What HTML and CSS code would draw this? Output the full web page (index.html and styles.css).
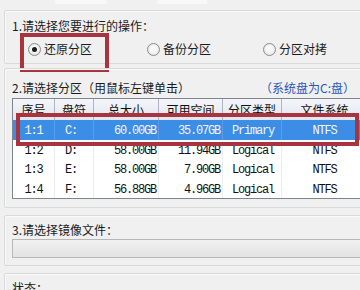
FILE: index.html
```html
<!DOCTYPE html>
<html lang="zh-CN">
<head>
<meta charset="utf-8">
<title>还原分区</title>
<link rel="stylesheet" href="styles.css">
</head>
<body>
<div class="topbar">
  <span class="seg seg-a"></span>
  <span class="seg seg-b"></span>
</div>
<div class="page">
  <section class="group g1">
    <div class="label">1.请选择您要进行的操作：</div>
    <div class="radios">
      <label class="radio"><span class="circle on"></span>还原分区</label>
      <label class="radio"><span class="circle"></span>备份分区</label>
      <label class="radio"><span class="circle"></span>分区对拷</label>
    </div>
    <div class="mark mark-op"></div>
  </section>

  <section class="group g2">
    <div class="label row-label">
      <span>2.请选择分区（用鼠标左键单击）</span>
      <span class="note">（系统盘为C:盘）</span>
    </div>
    <div class="table">
      <div class="row head">
        <span>序号</span><span>盘符</span><span>总大小</span><span>可用空间</span><span>分区类型</span><span>文件系统</span>
      </div>
      <div class="row sel">
        <span class="c">1:1</span><span class="l">C:</span><span class="r">60.00GB</span><span class="r">35.07GB</span><span class="l2">Primary</span><span class="c">NTFS</span>
      </div>
      <div class="row">
        <span class="c">1:2</span><span class="l">D:</span><span class="r">58.00GB</span><span class="r">11.94GB</span><span class="l2">Logical</span><span class="c">NTFS</span>
      </div>
      <div class="row">
        <span class="c">1:3</span><span class="l">E:</span><span class="r">58.00GB</span><span class="r">7.90GB</span><span class="l2">Logical</span><span class="c">NTFS</span>
      </div>
      <div class="row">
        <span class="c">1:4</span><span class="l">F:</span><span class="r">56.88GB</span><span class="r">4.96GB</span><span class="l2">Logical</span><span class="c">NTFS</span>
      </div>
    </div>
    <div class="mark mark-row"></div>
  </section>

  <section class="group g3">
    <div class="label">3.请选择镜像文件：</div>
    <div class="file"></div>
  </section>

  <section class="group g4">
    <div class="label">状态：</div>
  </section>
</div>
</body>
</html>
```

FILE: styles.css
```css
html, body {
  margin: 0;
  padding: 0;
  background: #f0f0f0;
  overflow: hidden;
}

body {
  width: 360px;
  height: 290px;
  font-family: "Noto Sans CJK SC", "Liberation Sans", sans-serif;
  font-size: 12px;
  color: #1b1b1b;
}

.topbar {
  height: 10px;
  display: flex;
  align-items: flex-start;
}

.seg {
  display: block;
  height: 4px;
  background: #f8f8f8;
}

.seg-a { width: 52px; margin-left: 55px; }
.seg-b { width: 50px; margin-left: 50px; }

.page {
  padding-left: 4px;
  display: flex;
  flex-direction: column;
}

.group {
  position: relative;
  width: 372px;
  box-sizing: border-box;
  border: 1px solid #d9d9d9;
  border-radius: 2px;
  box-shadow: inset 1px 1px 0 #fafafa;
  padding: 0 7px;
}

.label {
  height: 16px;
  line-height: 16px;
  white-space: nowrap;
}

.g1 { padding-top: 7px; padding-bottom: 6px; }
.g2 { margin-top: 4px; padding-top: 11px; padding-bottom: 8px; }
.g3 { margin-top: 7px; padding-top: 6px; padding-bottom: 7px; }
.g4 { margin-top: 7px; padding-top: 6px; height: 40px; }

/* radios */
.radios {
  margin-top: 7px;
  height: 16px;
  display: grid;
  grid-template-columns: 119px 116px auto;
  padding-left: 16px;
}

.radio {
  display: flex;
  align-items: center;
  gap: 3px;
  line-height: 16px;
}

.circle {
  width: 13px;
  height: 13px;
  box-sizing: border-box;
  border-radius: 50%;
  border: 1px solid #8b8b8b;
  background: radial-gradient(circle at 50% 45%, #ffffff 0%, #f4f4f4 45%, #d6d6d6 100%);
  display: grid;
  place-items: center;
}

.circle.on::after {
  content: "";
  width: 5px;
  height: 5px;
  border-radius: 50%;
  background: #1c1c1c;
}

/* section 2 */
.row-label {
  display: flex;
  justify-content: space-between;
}

.note {
  color: #2a55b8;
  margin-right: 13px;
}

.table {
  margin-top: 2px;
  width: 356px;
  box-sizing: border-box;
  border: 1px solid #7f8590;
  background: #ffffff;
}

.row {
  display: grid;
  grid-template-columns: 42px 39px 65px 64px 59px 85px;
  height: 19.5px;
  font-family: "Liberation Mono", "Noto Sans CJK SC", monospace;
  font-size: 12px;
  letter-spacing: -1.2px;
  color: #111;
}

.row span {
  box-sizing: border-box;
  border-right: 1px solid #ececec;
  padding-top: 4px;
  line-height: 15px;
  white-space: nowrap;
  overflow: hidden;
}

.row span:last-child { border-right: 0; }

.row .c { text-align: center; }
.row .l { padding-left: 10px; }
.row .r { text-align: right; padding-right: 2px; }
.row .l2 { padding-left: 9px; }

.head {
  height: 21px;
  background: linear-gradient(#f3f5f9, #e2e7ef);
  font-family: "Noto Sans CJK SC", sans-serif;
  font-size: 12px;
  letter-spacing: 0;
}

.head span {
  text-align: center;
  padding-top: 2px;
  line-height: 17px;
  border-right: 1px solid #aeb5c0;
}

.sel {
  background: #3b8de6;
  color: #f2f6ff;
}

.sel span { border-right-color: #5a9ee9; }

/* section 3 */
.file {
  margin-top: 1px;
  width: 360px;
  height: 19px;
  box-sizing: border-box;
  border: 1px solid #b8b8b8;
  background: linear-gradient(#f1f1f1, #e3e3e3);
}

/* red highlight overlays */
.mark {
  position: absolute;
  border: 4px solid #a9333f;
  box-sizing: border-box;
  pointer-events: none;
}

.mark-op {
  left: 15px;
  top: 22px;
  width: 89px;
  height: 39px;
}

.mark-row {
  left: 11px;
  top: 44px;
  width: 343px;
  height: 33px;
}
```
